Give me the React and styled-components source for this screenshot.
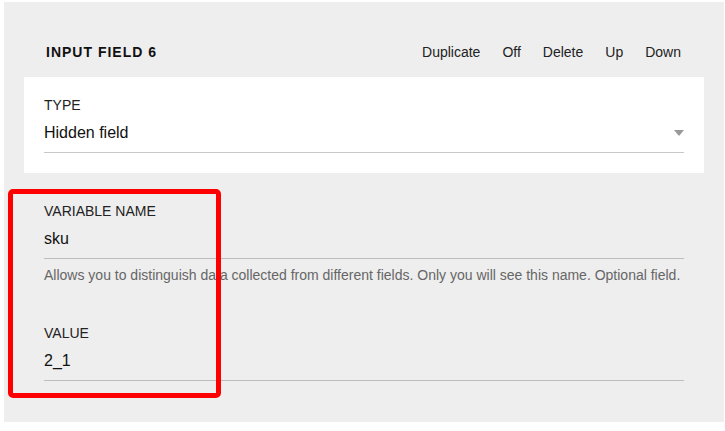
import React from 'react';
import styled, { createGlobalStyle } from 'styled-components';

const GlobalStyle = createGlobalStyle`
  html, body {
    margin: 0;
    padding: 0;
    background: #fff;
  }

  body {
    font-family: "Liberation Sans", Arial, sans-serif;
    color: #222;
  }
`;

const Panel = styled.div`
  position: relative;
  margin: 2px 1px 0 4px;
  padding: 0 20px 41px;
  background: #eee;
`;

const Header = styled.div`
  display: flex;
  align-items: center;
  justify-content: space-between;
  padding: 42px 23px 17px 22px;
  line-height: 16px;
`;

const Title = styled.div`
  font-size: 14px;
  font-weight: bold;
  letter-spacing: 1px;
  color: #111;
`;

const Actions = styled.div`
  display: flex;
  gap: 22px;
`;

const Action = styled.button`
  border: none;
  background: transparent;
  padding: 0;
  font: inherit;
  font-size: 14px;
  line-height: 16px;
  color: #222;
  cursor: pointer;
`;

const Card = styled.div`
  background: #fff;
  padding: 20px;
`;

const Field = styled.div`
  padding: ${props => props.$top || 0}px 20px 0;
`;

const Label = styled.div`
  font-size: 14px;
  line-height: 16px;
  color: #222;
`;

const Control = styled.div`
  display: flex;
  align-items: center;
  justify-content: space-between;
  margin-top: 11px;
  padding-bottom: 10px;
  border-bottom: 1px solid ${props => props.$line || '#c8c8c8'};
  font-size: 16px;
  line-height: 18px;
  color: #111;
`;

const Caret = styled.span`
  width: 0;
  height: 0;
  border-left: 5px solid transparent;
  border-right: 5px solid transparent;
  border-top: 6px solid #999;
`;

const Help = styled.div`
  margin-top: 8px;
  font-size: 14px;
  line-height: 16px;
  color: #666;
`;

const Highlight = styled.div`
  position: absolute;
  left: 4px;
  top: 187px;
  width: 203px;
  height: 199px;
  border: 5px solid #f00;
  border-radius: 5px;
  pointer-events: none;
`;

export default function App() {
  return (
    <>
      <GlobalStyle />
      <Panel>
        <Header>
          <Title>INPUT FIELD 6</Title>
          <Actions>
            <Action>Duplicate</Action>
            <Action>Off</Action>
            <Action>Delete</Action>
            <Action>Up</Action>
            <Action>Down</Action>
          </Actions>
        </Header>

        <Card>
          <Label>TYPE</Label>
          <Control>
            Hidden field
            <Caret />
          </Control>
        </Card>

        <Field $top={30}>
          <Label>VARIABLE NAME</Label>
          <Control $line="#bdbdbd">sku</Control>
          <Help>
            Allows you to distinguish data collected from different fields. Only you will see this name. Optional field.
          </Help>
        </Field>

        <Field $top={42}>
          <Label>VALUE</Label>
          <Control $line="#bdbdbd">2_1</Control>
        </Field>

        <Highlight />
      </Panel>
    </>
  );
}
